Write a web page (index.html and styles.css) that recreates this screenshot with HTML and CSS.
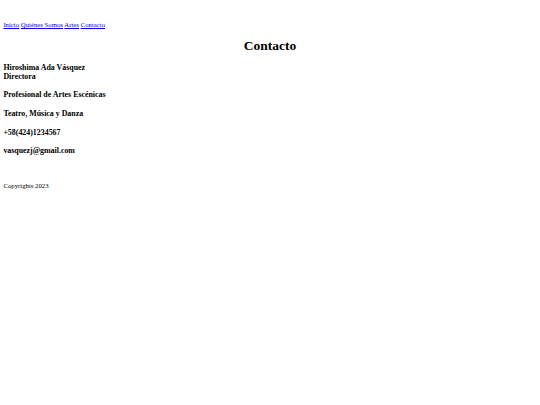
FILE: index.html
```html
<!DOCTYPE html>
<html lang="es">
<head>
<meta charset="utf-8">
<title>Contacto</title>
<link rel="stylesheet" href="styles.css">
</head>
<body>
<header class="site-header">
  <nav class="nav">
    <a href="#">Inicio</a>
    <a href="#">Quiénes Somos</a>
    <a href="#">Artes</a>
    <a href="#">Contacto</a>
  </nav>
</header>
<main class="content">
  <h1 class="title">Contacto</h1>
  <h3 class="item">Hiroshima Ada Vásquez<br>Directora</h3>
  <h3 class="item">Profesional de Artes Escénicas</h3>
  <h3 class="item">Teatro, Música y Danza</h3>
  <h3 class="item">+58(424)1234567</h3>
  <h3 class="item">vasquezj@gmail.com</h3>
</main>
<footer class="site-footer">
  <p class="copy">Copyrights 2023</p>
</footer>
</body>
</html>
```

FILE: styles.css
```css
html {
  background: #ffffff;
}

body {
  margin: 3.375px;
  font-family: "Liberation Serif", "Times New Roman", serif;
  font-size: 6.75px;
  line-height: 7.76px;
  color: #000000;
}

.site-header {
  padding-top: 17.5px;
}

.nav a {
  color: #0000ee;
  text-decoration: underline;
}

.title {
  font-size: 13.5px;
  line-height: 15.5px;
  font-weight: bold;
  text-align: center;
  margin: 9px 0;
}

.item {
  font-size: 7.9px;
  line-height: 9.1px;
  font-weight: bold;
  margin: 9.6px 0;
}

.content .item:first-of-type {
  margin-top: 9.4px;
}

.site-footer {
  padding-top: 10px;
}

.copy {
  margin: 6.75px 0;
}
```
